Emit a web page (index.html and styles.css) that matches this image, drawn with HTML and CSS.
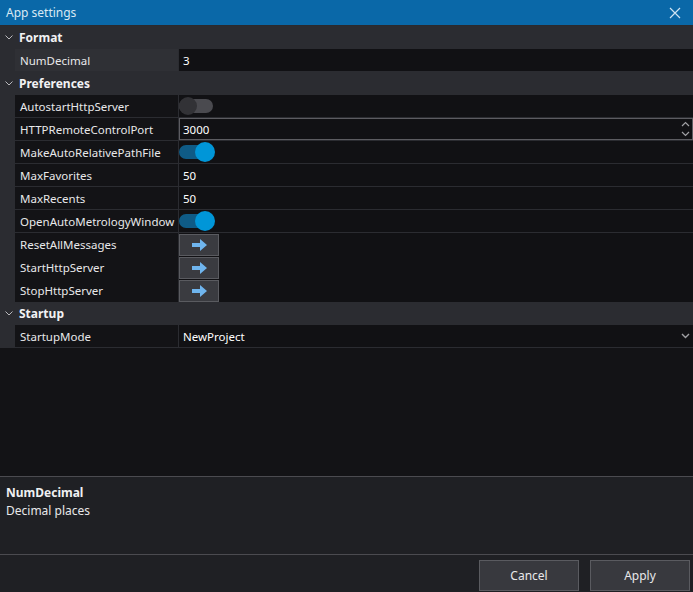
FILE: index.html
```html
<!DOCTYPE html>
<html lang="en">
<head>
    <meta charset="UTF-8">
    <title>App settings</title>
    <link rel="stylesheet" href="styles.css">
</head>
<body>
    <div class="window">
        <div class="titlebar">
            <span class="title">App settings</span>
            <svg class="close" width="12" height="12" viewBox="0 0 12 12"><path d="M1 1L11 11M11 1L1 11" stroke="#cfe3f2" stroke-width="1.2"/></svg>
        </div>

        <div class="grid">
            <div class="props">
                <div class="category"><svg class="chev" width="8" height="5" viewBox="0 0 8 5"><path d="M0.5 0.5L4 4L7.5 0.5" fill="none" stroke="#b8b8bc" stroke-width="1"/></svg>Format</div>
                <div class="prop selected">
                    <div class="name">NumDecimal</div>
                    <div class="value">3</div>
                </div>

                <div class="category"><svg class="chev" width="8" height="5" viewBox="0 0 8 5"><path d="M0.5 0.5L4 4L7.5 0.5" fill="none" stroke="#b8b8bc" stroke-width="1"/></svg>Preferences</div>
                <div class="prop">
                    <div class="name">AutostartHttpServer</div>
                    <div class="value"><span class="toggle"><span class="knob"></span></span></div>
                </div>
                <div class="prop">
                    <div class="name">HTTPRemoteControlPort</div>
                    <div class="value input">3000
                        <svg class="spin" width="9" height="16" viewBox="0 0 9 16"><path d="M1 5L4.5 1.5L8 5M1 11L4.5 14.5L8 11" fill="none" stroke="#a0a0a4" stroke-width="1.2"/></svg>
                    </div>
                </div>
                <div class="prop">
                    <div class="name">MakeAutoRelativePathFile</div>
                    <div class="value"><span class="toggle on"><span class="knob"></span></span></div>
                </div>
                <div class="prop">
                    <div class="name">MaxFavorites</div>
                    <div class="value">50</div>
                </div>
                <div class="prop">
                    <div class="name">MaxRecents</div>
                    <div class="value">50</div>
                </div>
                <div class="prop">
                    <div class="name">OpenAutoMetrologyWindow</div>
                    <div class="value"><span class="toggle on"><span class="knob"></span></span></div>
                </div>
                <div class="prop">
                    <div class="name">ResetAllMessages</div>
                    <div class="value"><span class="go"><svg width="17" height="14" viewBox="0 0 17 14"><path d="M1 5H9V1L16 7L9 13V9H1Z" fill="#6fb5ee"/></svg></span></div>
                </div>
                <div class="prop">
                    <div class="name">StartHttpServer</div>
                    <div class="value"><span class="go"><svg width="17" height="14" viewBox="0 0 17 14"><path d="M1 5H9V1L16 7L9 13V9H1Z" fill="#6fb5ee"/></svg></span></div>
                </div>
                <div class="prop">
                    <div class="name">StopHttpServer</div>
                    <div class="value"><span class="go"><svg width="17" height="14" viewBox="0 0 17 14"><path d="M1 5H9V1L16 7L9 13V9H1Z" fill="#6fb5ee"/></svg></span></div>
                </div>

                <div class="category"><svg class="chev" width="8" height="5" viewBox="0 0 8 5"><path d="M0.5 0.5L4 4L7.5 0.5" fill="none" stroke="#b8b8bc" stroke-width="1"/></svg>Startup</div>
                <div class="prop">
                    <div class="name">StartupMode</div>
                    <div class="value">NewProject
                        <svg class="drop" width="9" height="6" viewBox="0 0 9 6"><path d="M1 1L4.5 4.5L8 1" fill="none" stroke="#a0a0a4" stroke-width="1.4"/></svg>
                    </div>
                </div>
            </div>
        </div>

        <div class="description">
            <div class="desc-title">NumDecimal</div>
            <div class="desc-text">Decimal places</div>
        </div>

        <div class="buttons">
            <button class="btn">Cancel</button>
            <button class="btn">Apply</button>
        </div>
    </div>
</body>
</html>
```

FILE: styles.css
```css
html, body {
    margin: 0;
    padding: 0;
}
body {
    font-family: "Noto Sans", "Open Sans", sans-serif;
    font-size: 11.5px;
    color: #e8e8ea;
    background: #131316;
}
.window {
    display: flex;
    flex-direction: column;
    width: 693px;
    height: 592px;
    overflow: hidden;
}
.titlebar {
    height: 25px;
    background: #0a68a8;
    display: flex;
    align-items: center;
    justify-content: space-between;
    padding: 0 12px 0 6px;
    border-bottom: 1px solid #2a2a2f;
}
.title {
    color: #d9e8f4;
    font-size: 12px;
}
.grid {
    flex: 1;
    background: #131316;
}
.props {
    background: #2b2c31;
    display: flex;
    flex-direction: column;
    gap: 1px;
    padding-bottom: 1px;
}
.category {
    height: 22px;
    display: flex;
    align-items: center;
    font-weight: bold;
    font-size: 12px;
    color: #f2f2f4;
}
.chev {
    margin: 0 6px 0 5px;
}
.prop {
    height: 22px;
    margin-left: 15px;
    display: grid;
    grid-template-columns: 163px 1fr;
    gap: 1px;
}
.name {
    background: #131316;
    display: flex;
    align-items: center;
    padding-left: 5px;
    white-space: nowrap;
    overflow: hidden;
}
.prop.selected .name {
    background: #2f3035;
}
.value {
    background: #111114;
    display: flex;
    align-items: center;
    padding-left: 4px;
    color: #ffffff;
    position: relative;
}
.value.input {
    box-shadow: inset 0 0 0 1px #5c5c61;
}
.spin {
    position: absolute;
    right: 3px;
    top: 3px;
}
.drop {
    position: absolute;
    right: 3px;
    top: 8px;
}
.toggle {
    width: 34px;
    height: 14px;
    border-radius: 7px;
    background: #4a4a4f;
    position: relative;
    margin-left: -4px;
}
.toggle .knob {
    position: absolute;
    left: 0;
    top: -2px;
    width: 18px;
    height: 18px;
    border-radius: 50%;
    background: #323236;
}
.toggle.on {
    background: #0f5b86;
}
.toggle.on .knob {
    left: auto;
    right: -2px;
    top: -3px;
    width: 20px;
    height: 20px;
    background: #0096d8;
}
.go {
    width: 38px;
    height: 20px;
    margin-left: -4px;
    margin-top: 1px;
    background: #3a3b40;
    border: 1px solid #5a5b60;
    display: flex;
    align-items: center;
    justify-content: center;
}
.description {
    height: 79px;
    background: #1f2024;
    border-top: 1px solid #4b4b50;
    border-bottom: 1px solid #4b4b50;
    padding: 8px 6px 0;
    box-sizing: border-box;
}
.desc-title {
    font-weight: bold;
    font-size: 12px;
    color: #f0f0f2;
    line-height: 16px;
}
.desc-text {
    font-size: 12px;
    line-height: 20px;
}
.buttons {
    height: 37px;
    background: #1f2024;
    display: flex;
    justify-content: flex-end;
    gap: 11px;
    padding: 5px 3px 0 0;
    box-sizing: border-box;
}
.btn {
    width: 100px;
    height: 31px;
    background: #38393e;
    border: 1px solid #5a5b60;
    color: #e8e8ea;
    font-family: "Noto Sans", "Open Sans", sans-serif;
    font-size: 12px;
}
```
